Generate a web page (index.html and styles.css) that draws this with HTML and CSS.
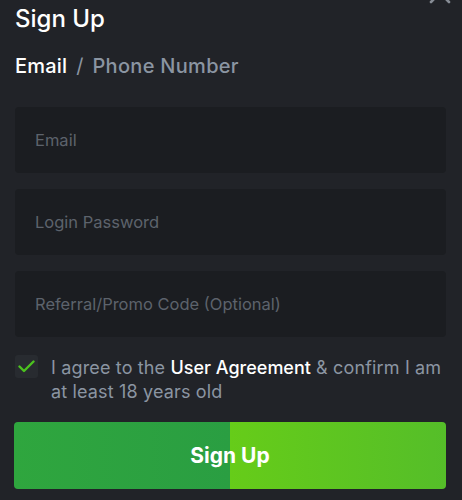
FILE: index.html
```html
<!DOCTYPE html>
<html lang="en">
<head>
  <meta charset="UTF-8">
  <meta name="viewport" content="width=device-width, initial-scale=1.0">
  <title>Sign Up</title>
  <link rel="stylesheet" href="styles.css">
</head>
<body>

  <div class="modal">
    <button class="close" aria-label="Close">
      <svg width="24" height="24" viewBox="0 0 24 24">
        <path d="M3 3 L21 21 M21 3 L3 21" stroke="#868c95" stroke-width="2.6" stroke-linecap="round" fill="none"/>
      </svg>
    </button>

    <h1 class="title">Sign Up</h1>

    <div class="tabs">
      <span class="tab active">Email</span>
      <span class="sep">/</span>
      <span class="tab">Phone Number</span>
    </div>

    <form class="form" onsubmit="return false">
      <input class="field" type="email" placeholder="Email">
      <input class="field" type="password" placeholder="Login Password">
      <input class="field" type="text" placeholder="Referral/Promo Code (Optional)">

      <label class="agree">
        <span class="check">
          <svg width="17" height="13" viewBox="0 0 17 13">
            <path d="M1.5 6.5 L6 11 L15.5 1.5" stroke="#4cc21f" stroke-width="2.4" fill="none" stroke-linecap="round" stroke-linejoin="round"/>
          </svg>
        </span>
        <span class="agree-text">I agree to the <b>User Agreement</b> &amp; confirm I am at least 18 years old</span>
      </label>

      <button class="submit" type="submit">Sign Up</button>
    </form>
  </div>

</body>
</html>
```

FILE: styles.css
```css
* {
  box-sizing: border-box;
  margin: 0;
  padding: 0;
}

body {
  font-family: Inter, 'Noto Sans', sans-serif;
  background: #212328;
  color: #fff;
  overflow: hidden;
}

.modal {
  position: relative;
  padding: 4px 16px 0 15px;
}

.close {
  position: absolute;
  top: -19px;
  right: 10px;
  background: none;
  border: none;
  cursor: pointer;
}

.close svg {
  display: block;
}

.title {
  font-size: 24px;
  line-height: 30px;
  font-weight: 500;
}

.tabs {
  margin-top: 20px;
  font-size: 20px;
  line-height: 24px;
  font-weight: 500;
  display: flex;
  gap: 9px;
}

.tab {
  color: #8b95a2;
  letter-spacing: 0.3px;
}

.tab.active {
  color: #fff;
  letter-spacing: 0.2px;
}

.sep {
  color: #8b95a2;
  font-weight: 400;
}

.form {
  margin-top: 29px;
  display: flex;
  flex-direction: column;
}

.field {
  height: 66px;
  margin-bottom: 16px;
  padding: 0 20px;
  border: none;
  border-radius: 4px;
  background: #1b1d21;
  color: #fff;
  font-family: inherit;
  font-size: 16.5px;
  outline: none;
}

.field::placeholder {
  color: #5d636c;
}

.agree {
  display: flex;
  align-items: flex-start;
  gap: 13px;
  margin-top: 2px;
  cursor: pointer;
}

.check {
  flex: none;
  width: 23px;
  height: 23px;
  border-radius: 3px;
  background: #282b30;
  display: flex;
  align-items: center;
  justify-content: center;
}

.agree-text {
  margin-top: 1px;
  font-size: 18px;
  line-height: 24px;
  letter-spacing: 0.15px;
  color: #8b95a2;
}

.agree-text b {
  color: #fff;
  font-weight: 500;
  letter-spacing: 0;
}

.submit {
  margin-top: 18px;
  margin-left: -1px;
  height: 67px;
  border: none;
  border-radius: 4px;
  background: linear-gradient(90deg, #2fa63e 0, #2a9e42 50%, #66cc19 50%, #55be29 100%);
  color: #fff;
  font-family: inherit;
  font-size: 21px;
  font-weight: 700;
  cursor: pointer;
}
```
